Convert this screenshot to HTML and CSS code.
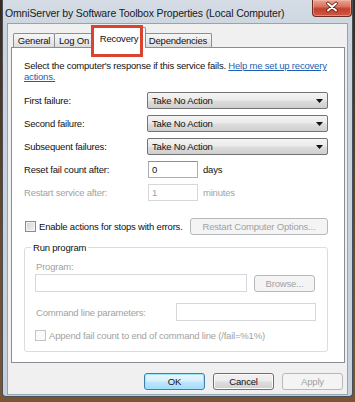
FILE: index.html
```html
<!DOCTYPE html>
<html>
<head>
<meta charset="utf-8">
<link rel="stylesheet" href="styles.css">
</head>
<body>
<div class="desk">
  <div class="window">
    <div class="titlebar">
      <span class="title">OmniServer by Software Toolbox Properties (Local Computer)</span>
      <div class="close">
        <svg width="40" height="17" viewBox="0 0 40 17">
          <path d="M16 4.5 L24 11.5 M24 4.5 L16 11.5" stroke="#5a1c12" stroke-width="3.6" stroke-linecap="round"/>
          <path d="M16 4.5 L24 11.5 M24 4.5 L16 11.5" stroke="#ffffff" stroke-width="2" stroke-linecap="round"/>
        </svg>
      </div>
    </div>
    <div class="client">
      <div class="tabs">
        <div class="tab t-general">General</div>
        <div class="tab t-logon">Log On</div>
        <div class="tab tab-sel t-recovery">Recovery</div>
        <div class="tab t-deps">Dependencies</div>
        <div class="mark"></div>
      </div>
      <div class="panel">
        <p class="intro">Select the computer's response if this service fails. <a class="link">Help me set up recovery</a><br><a class="link">actions.</a></p>
        <div class="grid">
          <span class="lbl">First failure:</span>
          <div class="combo"><span>Take No Action</span><svg width="7" height="4" viewBox="0 0 7 4"><path d="M0 0H7L3.5 4Z" fill="#111"/></svg></div>
          <span class="lbl">Second failure:</span>
          <div class="combo"><span>Take No Action</span><svg width="7" height="4" viewBox="0 0 7 4"><path d="M0 0H7L3.5 4Z" fill="#111"/></svg></div>
          <span class="lbl">Subsequent failures:</span>
          <div class="combo"><span>Take No Action</span><svg width="7" height="4" viewBox="0 0 7 4"><path d="M0 0H7L3.5 4Z" fill="#111"/></svg></div>
          <span class="lbl">Reset fail count after:</span>
          <div class="inrow"><div class="edit small">0</div><span class="unit">days</span></div>
          <span class="lbl dis">Restart service after:</span>
          <div class="inrow"><div class="edit small disabled">1</div><span class="unit dis">minutes</span></div>
        </div>
        <div class="checkrow">
          <div class="cbwrap"><span class="cb"></span><span>Enable actions for stops with errors.</span></div>
          <div class="btn disabled wide">Restart Computer Options...</div>
        </div>
        <fieldset class="group">
          <legend>Run program</legend>
          <div class="dis plabel">Program:</div>
          <div class="prow">
            <div class="edit disabled prog"></div>
            <div class="btn disabled browse">Browse...</div>
          </div>
          <div class="crow">
            <span class="dis clabel">Command line parameters:</span>
            <div class="edit disabled cmd"></div>
          </div>
          <div class="arow">
            <span class="cb cb-dis"></span><span class="dis">Append fail count to end of command line (/fail=%1%)</span>
          </div>
        </fieldset>
      </div>
      <div class="buttons">
        <div class="btn default">OK</div>
        <div class="btn">Cancel</div>
        <div class="btn disabled">Apply</div>
      </div>
    </div>
  </div>
</div>
</body>
</html>
```
FILE: styles.css
```css
* { box-sizing: border-box; }
html, body { margin: 0; padding: 0; }
body {
  width: 355px;
  height: 402px;
  overflow: hidden;
  background: linear-gradient(180deg, #3a2a1c 0%, #6b4a2d 60%, #7a5533 100%);
  font-family: "Liberation Sans", Arial, sans-serif;
  font-size: 9.5px;
  letter-spacing: -0.2px;
  color: #111111;
}
.desk {
  padding: 0 2px 5px 2px;
}
.window {
  width: 351px;
  height: 397px;
  background: linear-gradient(180deg, #d5dce5 0%, #ccd5df 30px, #c8d1db 100%);
  border: 1px solid #46505c;
  border-top: none;
  border-radius: 0 0 4px 4px;
  display: flex;
  flex-direction: column;
}
.titlebar {
  height: 23px;
  display: flex;
  justify-content: space-between;
  align-items: flex-start;
  padding-left: 2px;
}
.title {
  margin-top: 6px;
  font-size: 10.5px;
  letter-spacing: -0.15px;
  line-height: 14px;
  color: #1a1a1a;
}
.close {
  width: 40px;
  height: 17px;
  border: 1px solid #6e2c22;
  border-top: none;
  border-radius: 0 0 4px 4px;
  background: linear-gradient(180deg, #e8a794 0%, #d8735f 40%, #c4402c 55%, #cf5a44 100%);
  box-shadow: inset 0 0 0 1px rgba(255,200,180,0.45);
}
.close svg { display: block; margin: -1px 0 0 -1px; }
.client {
  margin: 0 4px;
  height: 372px;
  background: #f0f0f0;
  border: 1px solid #98a3b0;
  padding: 0 2px 0 3px;
}
.tabs {
  position: relative;
  z-index: 2;
  display: flex;
  align-items: flex-end;
  margin-top: 3px;
  margin-bottom: -1px;
  padding-left: 2px;
  height: 21px;
}
.tab {
  height: 14px;
  margin-bottom: 1px;
  border: 1px solid #8c8e94;
  border-bottom: none;
  border-radius: 2px 2px 0 0;
  background: linear-gradient(180deg, #f6f6f6 0%, #ececec 50%, #dcdcdc 100%);
  text-align: center;
  line-height: 13px;
  color: #111111;
}
.t-general { width: 42px; }
.t-logon { width: 40px; margin-left: -1px; }
.t-recovery { width: 54px; margin-left: -2px; }
.t-deps { width: 68px; margin-left: -2px; }
.tab-sel {
  position: relative;
  z-index: 3;
  height: 21px;
  margin-bottom: 0;
  background: #ffffff;
  padding-top: 4px;
  line-height: 13px;
}
.mark {
  position: absolute;
  left: 80px;
  top: -2px;
  width: 52px;
  height: 32px;
  border: 3px solid #d9432f;
  z-index: 5;
}
.panel {
  position: relative;
  z-index: 1;
  height: 316px;
  background: #ffffff;
  border: 1px solid #898c95;
  padding: 12px 16px 0 12px;
}
.intro {
  margin: 0;
  line-height: 11px;
}
.link {
  color: #1a5fb4;
  text-decoration: underline;
}
.grid {
  margin-top: 10px;
  display: grid;
  grid-template-columns: 123px 181px;
  grid-auto-rows: 17px;
  row-gap: 6px;
  align-items: center;
}
.lbl { line-height: 11px; }
.dis { color: #a2a2a2; }
.combo {
  height: 17px;
  border: 1px solid #737373;
  border-radius: 2px;
  background: linear-gradient(180deg, #f4f4f4 0%, #ebebeb 45%, #dcdcdc 55%, #cfcfcf 100%);
  display: flex;
  align-items: center;
  justify-content: space-between;
  padding: 0 4px 0 4px;
  line-height: 11px;
}
.combo svg { display: block; }
.inrow {
  display: flex;
  align-items: center;
  height: 17px;
}
.edit {
  height: 17px;
  border: 1px solid #abadb3;
  border-top-color: #8e9096;
  background: #fff;
  padding: 0 3px;
  line-height: 15px;
}
.edit.disabled {
  border-color: #d6d8dc;
  color: #a2a2a2;
}
.small { width: 50px; margin-left: 1px; }
.unit { margin-left: 5px; line-height: 11px; }
.checkrow {
  margin-top: 17px;
  height: 17px;
  display: flex;
  align-items: center;
  justify-content: space-between;
}
.cbwrap {
  display: flex;
  align-items: center;
  gap: 3px;
  padding-left: 1px;
  line-height: 11px;
}
.cb {
  display: inline-block;
  width: 11px;
  height: 11px;
  border: 1px solid #8a8a8a;
  background: linear-gradient(135deg, #cfcfcf 0%, #e6e6e6 60%, #f4f4f4 100%);
  box-shadow: inset 0 0 0 1px #f4f4f4;
}
.cb-dis {
  border-color: #c4c4c4;
  background: #fafafa;
  box-shadow: none;
}
.btn {
  width: 61px;
  height: 17px;
  border: 1px solid #707070;
  border-radius: 3px;
  background: linear-gradient(180deg, #f2f2f2 0%, #ebebeb 45%, #dddddd 55%, #cfcfcf 100%);
  box-shadow: inset 0 0 0 1px #fbfbfb;
  text-align: center;
  line-height: 15px;
  color: #111111;
}
.btn.disabled {
  border-color: #b5b9bd;
  background: #f4f4f4;
  box-shadow: none;
  color: #a2a2a2;
}
.btn.wide { width: 138px; }
.btn.default {
  border-color: #3c7fb1;
  background: linear-gradient(180deg, #eaf6fd 0%, #d9f0fc 45%, #bee6fd 55%, #a7d9f5 100%);
  box-shadow: inset 0 0 0 1px #9ee4fb;
}
.group {
  margin: 7px 0 0 0;
  width: 304px;
  border: 1px solid #d8dde2;
  border-radius: 3px;
  padding: 8px 10px 10px 10px;
  min-width: 0;
}
.group legend {
  margin-left: -4px;
  padding: 0 2px;
  line-height: 11px;
}
.plabel { line-height: 11px; padding-left: 1px; }
.prow {
  margin-top: 2px;
  display: flex;
  align-items: center;
  gap: 7px;
}
.prog { width: 212px; height: 18px; }
.browse { height: 17px; }
.crow {
  margin-top: 11px;
  display: flex;
  align-items: center;
}
.clabel { width: 141px; padding-left: 1px; line-height: 11px; }
.cmd { width: 140px; height: 18px; }
.arow {
  margin-top: 8px;
  display: flex;
  align-items: center;
  gap: 3px;
  height: 12px;
  line-height: 11px;
}
.buttons {
  margin-top: 10px;
  display: flex;
  justify-content: flex-end;
  gap: 8px;
  padding-right: 2px;
}
```
